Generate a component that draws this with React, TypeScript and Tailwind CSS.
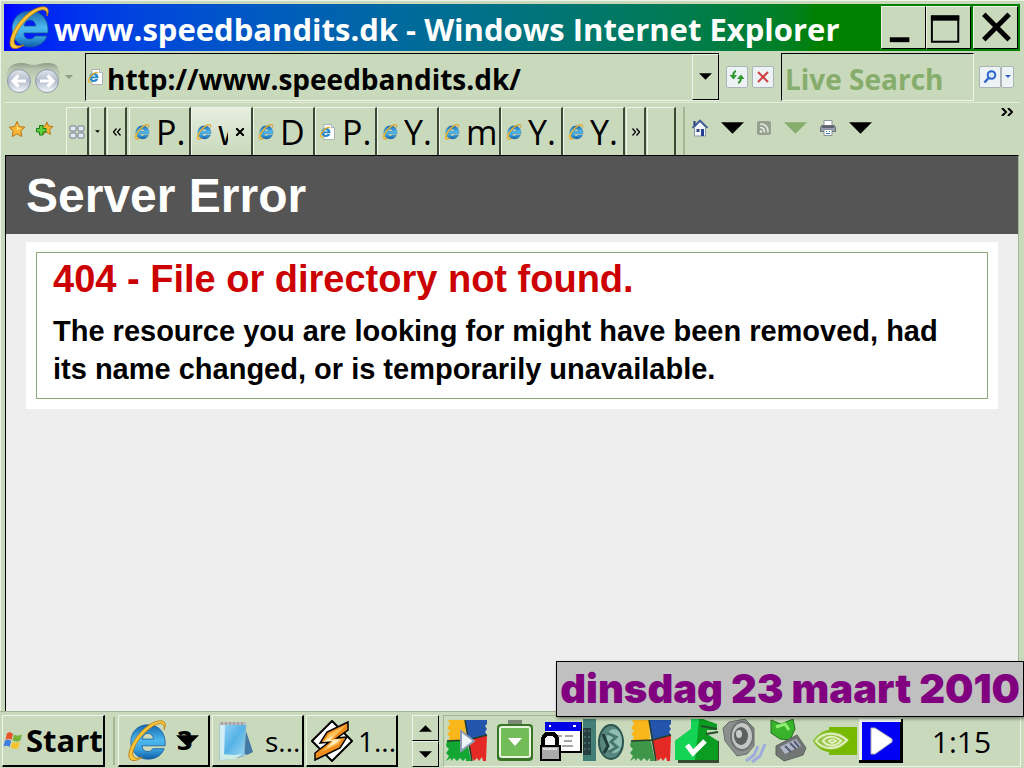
import React from "react";

const raised =
  "border border-t-[#eef5e8] border-l-[#eef5e8] border-r-black border-b-black";

function IEIcon({ className }: { className: string }) {
  return (
    <svg viewBox="0 0 42 44" className={className} aria-hidden="true">
      <defs>
        <linearGradient id="ieBlue" x1="0" y1="0" x2="0" y2="1">
          <stop offset="0" stopColor="#1668ae" />
          <stop offset="0.45" stopColor="#4cb8ee" />
          <stop offset="0.7" stopColor="#3aa4e2" />
          <stop offset="1" stopColor="#0f5fa8" />
        </linearGradient>
      </defs>
      <path
        fillRule="evenodd"
        fill="url(#ieBlue)"
        stroke="#14599a"
        strokeWidth="0.8"
        d="M22 5C11 5 4 13 4 23C4 34 12 41 22 41C31 41 37 36 39 30H27C26 32 24 33 22 33C18 33 16 31 16 27H40C41 14 34 5 22 5ZM16 20C17 16 19 14 22 14C25 14 27 16 28 20Z"
      />
      <path
        fill="#fdc63a"
        stroke="#b87a12"
        strokeWidth="0.9"
        d="M39 10C44 -2 32 -1 22 6C11 14 2 28 2 37C2 44 9 44 16 39C10 41 6 40 6 35C7 27 15 15 25 8C33 2 40 2 39 10Z"
      />
    </svg>
  );
}

function PageIcon({ className }: { className: string }) {
  return (
    <svg viewBox="0 0 16 16" className={className} aria-hidden="true">
      <path d="M4 .5h7.5l3 3v12H4z" fill="#fff" stroke="#a9b3b9" />
      <path d="M11.5.5v3h3" fill="#dde4e8" stroke="#a9b3b9" />
      <path
        fillRule="evenodd"
        fill="#2488cf"
        d="M6 4C3 4 1.400 6 1.400 8.500C1.400 11 3 13 6 13C8 13 9.500 12 10.200 10H7.500C6 11.500 4 11 4 9.300H10.400C10.700 6 9 4 6 4ZM4 7.500C4.500 5.700 7.300 5.700 7.700 7.500Z"
      />
      <path d="M10 4C9 2 3 5 1 10C0 13 1 14 3.500 12.500" fill="none" stroke="#e9b22d" strokeWidth="1.200" />
    </svg>
  );
}

function Down({ className }: { className: string }) {
  return (
    <svg viewBox="0 0 24 12" className={className} aria-hidden="true">
      <path d="M0 0H24L12 12Z" fill="currentColor" />
    </svg>
  );
}

function Chevrons({ left }: { left?: boolean }) {
  return (
    <svg viewBox="0 0 8 8" className={"h-2 w-2 " + (left ? "rotate-180" : "")} aria-hidden="true">
      <path d="M.5.5L3.500 4L.5 7.500M4.500.5L7.500 4L4.500 7.500" fill="none" stroke="#000" strokeWidth="1.300" />
    </svg>
  );
}

function NavArrows() {
  return (
    <svg viewBox="0 0 72 32" className="h-8 w-[72px] shrink-0" aria-hidden="true">
      <defs>
        <linearGradient id="nav" x1="0" y1="0" x2="0" y2="1">
          <stop offset="0" stopColor="#dfe5eb" />
          <stop offset="0.5" stopColor="#b3bccb" />
          <stop offset="1" stopColor="#f4f8fb" />
        </linearGradient>
        <linearGradient id="navTop" x1="0" y1="0" x2="0" y2="1">
          <stop offset="0" stopColor="#8f9c88" />
          <stop offset="0.35" stopColor="#b7c3ae" />
          <stop offset="1" stopColor="#c9d9bc" />
        </linearGradient>
      </defs>
      <path d="M0 20C-1 6 7 1 17 2C23 3 25 4 28 4C31 4 35 2 41 2C51 1 55 7 54 20Z" fill="url(#navTop)" />
      <circle cx="13" cy="20" r="11.500" fill="url(#nav)" stroke="#8d99a5" />
      <circle cx="41" cy="20" r="11.500" fill="url(#nav)" stroke="#8d99a5" />
      <path d="M20 20H7M12.500 14.500L7 20L12.500 25.500M34 20H47M41.500 14.500L47 20L41.500 25.500" stroke="#fff" strokeWidth="3.200" fill="none" />
      <path d="M59 14H67L63 18Z" fill="#8f9c88" />
    </svg>
  );
}

function Star({ plus }: { plus?: boolean }) {
  return (
    <svg viewBox="0 0 18 18" className="h-[18px] w-[18px]" aria-hidden="true">
      <path
        d={plus ? "M12 2L13.500 6L18 6.500L14.700 9.500L15.500 14.500L11.500 12L8 14L8.800 9L6 6.500L10.200 6Z" : "M9 1.500L11.300 6.500L16.800 7.200L12.800 11L13.800 16.500L9 13.800L4.200 16.500L5.200 11L1.200 7.200L6.700 6.500Z"}
        fill="#fbb733"
        stroke="#b9761b"
      />
      {plus ? (
        <path d="M4.500 5.500H8V8.500H11V12H8V15H4.500V12H1.500V8.500H4.500Z" fill="#5fd23e" stroke="#1d7a1a" />
      ) : (
        <path d="M9 4.500L10.400 7.800L13.500 8.300L9 10Z" fill="#ffe48c" />
      )}
    </svg>
  );
}

function QuickTabsIcon() {
  return (
    <svg viewBox="0 0 16 14" className="h-[14px] w-4" aria-hidden="true">
      <g fill="#e6ecf2" stroke="#6d7a90">
        <rect x="1" y="1" width="6" height="5" rx="1" />
        <rect x="9" y="1" width="6" height="5" rx="1" />
        <rect x="1" y="8" width="6" height="5" rx="1" />
        <rect x="9" y="8" width="6" height="5" rx="1" />
      </g>
    </svg>
  );
}

function HomeIcon() {
  return (
    <svg viewBox="0 0 16 18" className="h-[18px] w-4" aria-hidden="true">
      <path d="M2.500 2V7" stroke="#26377c" strokeWidth="2" />
      <path d="M2.500 8.500L8 3L13.500 8.500V17H2.500Z" fill="#f3f6fa" stroke="#8995ae" />
      <path d="M.5 9L8 1.500L15.500 9" fill="none" stroke="#3a5796" strokeWidth="1.600" />
      <rect x="4.500" y="10" width="3" height="3" fill="#33457f" />
      <rect x="9" y="10" width="3" height="7" fill="#25408f" />
    </svg>
  );
}

function RssIcon() {
  return (
    <svg viewBox="0 0 14 14" className="h-[14px] w-[14px]" aria-hidden="true">
      <rect width="14" height="14" rx="2" fill="#96a08e" />
      <g fill="none" stroke="#e2e8dc" strokeWidth="1.600">
        <path d="M3 3C8 3 11 6 11 11.500M3 6.500C6 6.500 7.500 8 7.500 11.500" />
      </g>
      <circle cx="4" cy="10.500" r="1.300" fill="#e2e8dc" />
    </svg>
  );
}

function PrinterIcon() {
  return (
    <svg viewBox="0 0 16 16" className="h-4 w-4" aria-hidden="true">
      <path d="M4 6V.5H12V6" fill="#fff" stroke="#8b939f" />
      <path d="M1.500 5.500H14.500L15.500 8V11.500H.5V8Z" fill="#9a9fab" stroke="#6a6e79" />
      <path d="M2 7H14" stroke="#50545f" strokeWidth="1.600" />
      <path d="M4 9.500H12V15.500H4Z" fill="#fff" stroke="#8b939f" />
      <path d="M6 11.500H7M9 11.500H10M6 13.500H10" stroke="#3478b7" />
    </svg>
  );
}

function WindowsFlag() {
  return (
    <svg viewBox="0 0 20 20" className="h-5 w-5 shrink-0" aria-hidden="true">
      <path d="M4 2C6 1 8 1 10 3L8.500 9C6.500 7.500 4.500 8 2.500 8.500Z" fill="#e8572b" />
      <path d="M11 3.500C13 5 16 5 19 3.500L17.500 9.500C15 11 12 11 9.500 9.500Z" fill="#76b43c" />
      <path d="M2 9.500C4 8.500 6 8.500 8.200 10L6.500 16C4.500 14.500 2.500 14.500.5 15.500Z" fill="#3f7ce0" />
      <path d="M9.200 11C12 12 14 12 17 10.500L15.500 17C13 18.500 10 18 7.500 16.500Z" fill="#f4c530" />
    </svg>
  );
}

function NotepadIcon() {
  return (
    <svg viewBox="0 0 36 42" className="h-[42px] w-9 shrink-0" aria-hidden="true">
      <defs>
        <linearGradient id="pad" x1="0" y1="0" x2="1" y2="1">
          <stop offset="0" stopColor="#9fd8f6" />
          <stop offset="0.5" stopColor="#56b2e6" />
          <stop offset="1" stopColor="#a6dcf2" />
        </linearGradient>
      </defs>
      <path d="M27 8L35 32L29 35L24 33Z" fill="#4279a6" />
      <path d="M2 3L28 4L26 36L17 38L2 40Z" fill="url(#pad)" stroke="#8cb6c9" />
      <path d="M2 3H7L6 39H2Z" fill="#cfeef6" />
      <path d="M2 34L17 35L24 34L17 39L2 40Z" fill="#cdeee8" />
      <path d="M2 2H28V5H2Z" fill="#b8bfc4" />
      <path d="M4 2V5M8 2V5M12 2V5M16 2V5M20 2V5M24 2V5" stroke="#a79690" strokeWidth="1.500" />
    </svg>
  );
}

function WinampIcon() {
  return (
    <svg viewBox="0 0 42 42" className="h-[42px] w-[42px] shrink-0" aria-hidden="true">
      <path d="M21 1L41 21L21 41L1 21Z" fill="#fff" stroke="#000" strokeWidth="2" />
      <path d="M37 2L16 12L9 23L18 22L4 33V40L29 28L36 17L26 18L37 10Z" fill="#f08c1c" stroke="#000" strokeWidth="1.500" />
      <path d="M35 5L18 14L13 21L24 20L10 32L27 24L31 19L20 20Z" fill="#ffc25a" />
      <path d="M12 22L22 21L15 28L25 23L29 19L19 20L23 15Z" fill="#fff0c0" />
    </svg>
  );
}

function ColourBlocks({ play }: { play?: boolean }) {
  return (
    <svg viewBox="0 0 42 42" className="h-[42px] w-[42px] shrink-0" aria-hidden="true">
      <path d="M2 0H19L20 20H2L4 17L1 14L4 11L1 8L4 4Z" fill="#f9b71c" />
      <path d="M19 0H41V4L39 6L41 9L39 12L41 15L22 20Z" fill="#2455ac" />
      <path d="M1 21H21L25 41H20V38L17 41L14 38L11 41L8 38L5 41V38L0 41L3 36L0 33L3 29L0 26Z" fill={play ? "#12a633" : "#3e9648"} />
      <path d="M22 20L41 15L40 41H37L36 37L33 41L31 38L28 41L26 38Z" fill="#e52a26" />
      <path d="M19 0L26 41M1 21L22 20L41 15" stroke="#233d28" strokeWidth="1.500" fill="none" />
      {play && <path d="M15 11L28 21L15 31Z" fill="#f0f4fb" stroke="#8c9ab2" strokeWidth="2" />}
    </svg>
  );
}

function TrayGreenBox() {
  return (
    <svg viewBox="0 0 38 42" className="h-[42px] w-[38px] shrink-0" aria-hidden="true">
      <path d="M12 2H26" stroke="#7d8879" strokeWidth="4" />
      <rect x="1" y="4" width="36" height="37" rx="4" fill="#387527" />
      <rect x="4" y="7" width="30" height="30" rx="2" fill="#72bd57" stroke="#e8f5df" strokeWidth="2" />
      <path d="M12 18H26L19 26Z" fill="#fff" />
    </svg>
  );
}

function TrayLock() {
  return (
    <svg viewBox="0 0 42 40" className="h-10 w-[42px] shrink-0" shapeRendering="crispEdges" aria-hidden="true">
      <rect x="6" y="1" width="36" height="31" fill="#000" />
      <rect x="6" y="1" width="34" height="29" fill="#fff" />
      <rect x="5" y="1" width="36" height="9" fill="#0000e6" />
      <path d="M9 5H11M33 5H36" stroke="#fff" strokeWidth="2" />
      <path d="M18 15H22M25 15H33M24 20H32M22 25H33" stroke="#a5a5a5" strokeWidth="2" />
      <path d="M3 25V17L6 13H14L17 17V25" fill="#fff" stroke="#000" strokeWidth="4" />
      <rect x="1" y="25" width="19" height="14" fill="#aaa" stroke="#000" strokeWidth="2" />
      <path d="M3 28H17" stroke="#ddd" strokeWidth="2" />
    </svg>
  );
}

function TrayDevices() {
  return (
    <svg viewBox="0 0 44 44" className="h-[44px] w-[44px] shrink-0" aria-hidden="true">
      <rect x="1" y="0" width="13" height="42" fill="#427f77" />
      <rect x="1" y="9" width="8" height="27" fill="#273f40" />
      <path d="M2 12H8M2 18H8M2 24H8M2 30H8" stroke="#5b8c86" strokeDasharray="2 2" />
      <ellipse cx="29" cy="23" rx="12" ry="17" fill="#57877e" stroke="#2c5750" strokeWidth="2" />
      <ellipse cx="32" cy="22" rx="8" ry="12" fill="#8fbdb1" />
      <path d="M25 14L34 18L29 23L35 28L27 33" stroke="#47766d" strokeWidth="3" fill="none" />
      <path d="M21 15L26 27L22 34" stroke="#203d3a" strokeWidth="3" fill="none" />
    </svg>
  );
}

function TrayCheck() {
  return (
    <svg viewBox="0 0 44 44" className="h-[44px] w-[44px] shrink-0" aria-hidden="true">
      <path d="M3 41H43V22H44V44H3Z" fill="#334c2f" />
      <path d="M0 22L16 10V0H28L42 5V11H32V15L43 22V41H0Z" fill="#0b9c22" />
      <path d="M0 22L16 10V0H24L20 41H0Z" fill="#13d455" />
      <path d="M26 7L42 10M31 15L43 13" stroke="#20512a" strokeWidth="2" />
      <path d="M12 26L18 34L30 22" fill="none" stroke="#fff" strokeWidth="5" />
    </svg>
  );
}

function TraySpeaker() {
  return (
    <svg viewBox="0 0 46 44" className="h-[44px] w-[46px] shrink-0" aria-hidden="true">
      <path d="M2 9L8 3L24 0L33 9V27L26 35L16 37L4 22Z" fill="#8b8f8e" stroke="#6b706e" />
      <ellipse cx="21" cy="17" rx="11" ry="14" fill="#c3c6c5" stroke="#6f7472" strokeWidth="2" />
      <ellipse cx="20" cy="17" rx="7" ry="9" fill="#5c605f" />
      <ellipse cx="18" cy="15" rx="3" ry="4" fill="#c9cccb" />
      <path d="M25 42L33 36L37 27M31 43L39 37L44 25" stroke="#9eacdb" strokeWidth="3" fill="none" />
    </svg>
  );
}

function TrayPlug() {
  return (
    <svg viewBox="0 0 38 44" className="h-[44px] w-[38px] shrink-0" aria-hidden="true">
      <path d="M2 1L12 5L24 0L26 10L21 21L11 20L2 14Z" fill="#38b32b" stroke="#257020" />
      <path d="M7 8L16 5L20 11" stroke="#8df170" strokeWidth="3" fill="none" />
      <path d="M7 27L28 16L37 29L34 36L15 42L7 36Z" fill="#727775" stroke="#5b615e" />
      <path d="M11 28L27 20L32 27L16 35Z" fill="#b0b7c9" />
      <path d="M16 27L22 33M21 24L27 30M25 22L30 28" stroke="#555b72" strokeWidth="2" />
    </svg>
  );
}

function TrayNvidia() {
  return (
    <svg viewBox="0 0 44 30" className="h-[30px] w-[44px] shrink-0" aria-hidden="true">
      <path d="M16 1H44V29H16V26C8 25 3 20 0 15C4 9 9 5 16 4Z" fill="#76b900" />
      <path d="M0 15C7 3 25 2 36 14C27 27 9 27 0 15Z" fill="#96c647" />
      <g fill="none" stroke="#e2efbf" strokeWidth="2">
        <path d="M3 15C10 6 23 5 34 14C25 24 11 25 3 15Z" />
        <path d="M10 15C15 9 23 10 28 15C22 21 15 21 10 15Z" />
        <path d="M16 15C18 13 21 13 23 15L19 17Z" />
      </g>
    </svg>
  );
}

function TrayPlay() {
  return (
    <svg viewBox="0 0 44 44" className="h-[44px] w-[44px] shrink-0" aria-hidden="true">
      <rect width="44" height="44" fill="#000" />
      <path d="M0 0H42V3H3V41H0Z" fill="#f2f5ef" />
      <rect x="3" y="3" width="38" height="38" fill="#0000f5" />
      <path d="M12 9H16L33 20V23L16 35H12Z" fill="#fff" stroke="#b0b0b0" />
    </svg>
  );
}

function Tab({ label, page, active }: { label: string; page?: boolean; active?: boolean }) {
  return (
    <button
      className={
        "flex h-full w-[62px] shrink-0 items-center border-r-2 border-r-[#3c4936] border-t border-t-[#eef5e8] border-l border-l-[#eef5e8] pl-[4px] " +
        (active ? "bg-gradient-to-b from-[#e6eee0] to-[#c9d9bc]" : "")
      }
    >
      {page ? <PageIcon className="h-4 w-4 shrink-0" /> : <IEIcon className="h-4 w-4 shrink-0" />}
      <span className={"ml-[6px] text-left text-[34px] leading-[46px] whitespace-nowrap " + (active ? "w-[10px] overflow-hidden" : "")}>
        {label}
      </span>
      {active && (
        <svg viewBox="0 0 8 8" className="ml-[8px] h-2 w-2 shrink-0" aria-hidden="true">
          <path d="M0 0L8 8M8 0L0 8" stroke="#000" strokeWidth="2" />
        </svg>
      )}
    </button>
  );
}

function TitleBar() {
  const button = "flex h-[43px] w-[45px] items-center justify-center border border-t-[#eef5e8] border-l-[#eef5e8] border-r-black border-b-black bg-[#c9d9bc]";
  return (
    <header className="flex h-[47px] shrink-0 items-center bg-gradient-to-r from-[#0000ff] to-[#008000] to-80% pr-[2px] pl-[4px]">
      <IEIcon className="h-[44px] w-[42px] shrink-0" />
      <h1 className="ml-[4px] flex-1 pt-[3px] text-[31px] leading-[44px] font-bold whitespace-nowrap text-white">
        www.speedbandits.dk - Windows Internet Explorer
      </h1>
      <div className="flex">
        <button aria-label="Minimize" className={button}>
          <svg viewBox="0 0 44 42" className="h-[42px] w-[44px]"><path d="M8 33H28" stroke="#000" strokeWidth="5" /></svg>
        </button>
        <button aria-label="Maximize" className={button}>
          <svg viewBox="0 0 44 42" className="h-[42px] w-[44px]"><path d="M5 9H32V35H5Z" fill="none" stroke="#000" strokeWidth="2" /><path d="M4 11H33" stroke="#000" strokeWidth="5" /></svg>
        </button>
        <button aria-label="Close" className={button + " ml-[2px]"}>
          <svg viewBox="0 0 44 42" className="h-[42px] w-[44px]"><path d="M10 7L36 33M36 7L10 33" stroke="#000" strokeWidth="5" /></svg>
        </button>
      </div>
    </header>
  );
}

function AddressBar() {
  const small = "flex h-[22px] items-center justify-center rounded-[2px] border border-[#a9b5b8] bg-[#edf2f4]";
  return (
    <div className="flex h-[51px] shrink-0 items-center pr-[6px] pl-[2px]">
      <button aria-label="Back and forward" className="flex w-[79px] shrink-0 items-center"><NavArrows /></button>
      <div className="flex h-[48px] min-w-0 flex-1 items-center border-t border-b border-l border-t-black border-b-[#eef5e8] border-l-black pl-[2px]">
        <PageIcon className="h-4 w-4 shrink-0" />
        <input
          aria-label="Address"
          defaultValue="http://www.speedbandits.dk/"
          className="ml-[3px] h-[44px] min-w-0 flex-1 bg-transparent pt-[4px] text-[28px] font-bold text-black outline-none"
        />
        <button aria-label="Address history" className={"flex h-[46px] w-[27px] items-center justify-center " + raised}>
          <Down className="h-[7px] w-[13px]" />
        </button>
      </div>
      <button aria-label="Refresh" className={small + " ml-[7px] w-[22px]"}>
        <svg viewBox="0 0 16 14" className="h-[14px] w-4">
          <path d="M7 1C4 2 4 5 4 7M9 13C12 12 12 9 12 7" fill="none" stroke="#2d9a2b" strokeWidth="2" />
          <path d="M.5 5L8 5L4.500 9.500ZM8 9H15.500L12 4.500Z" fill="#2d9a2b" />
        </svg>
      </button>
      <button aria-label="Stop" className={small + " ml-[4px] w-[22px]"}>
        <svg viewBox="0 0 12 12" className="h-3 w-3"><path d="M1 1L11 11M11 1L1 11" stroke="#cf4045" strokeWidth="2" /></svg>
      </button>
      <input
        aria-label="Search"
        placeholder="Live Search"
        className="ml-[7px] h-[48px] w-[193px] border border-t-black border-r-[#eef5e8] border-b-[#eef5e8] border-l-black bg-transparent pt-[4px] pl-[3px] text-[28px] font-bold outline-none placeholder:text-[#86ad6c] placeholder:opacity-100"
      />
      <button aria-label="Search the web" className={small + " ml-[5px] w-[22px]"}>
        <svg viewBox="0 0 14 14" className="h-[14px] w-[14px]">
          <circle cx="8.500" cy="5" r="3.800" fill="#dcebfb" stroke="#2c66cc" strokeWidth="2" />
          <path d="M5.500 8L1.500 12.500" stroke="#2c66cc" strokeWidth="2.500" />
        </svg>
      </button>
      <button aria-label="Search options" className={small + " w-[13px] text-[#2c66cc]"}>
        <Down className="h-[3px] w-[6px]" />
      </button>
    </div>
  );
}

function TabRow() {
  const slot = "flex h-full shrink-0 items-center justify-center border-t border-l border-t-[#eef5e8] border-l-[#eef5e8] border-r-2 border-r-[#3c4936]";
  return (
    <div className="flex h-[53px] shrink-0 items-end border-t border-[#e2edd9] pt-[4px]">
      <div className="flex h-full w-[62px] shrink-0 items-center gap-[9px] pb-[4px] pl-[4px]">
        <button aria-label="Favorites"><Star /></button>
        <button aria-label="Add to favorites"><Star plus /></button>
      </div>
      <button aria-label="Quick tabs" className={slot + " w-[23px]"}><QuickTabsIcon /></button>
      <button aria-label="Tab list" className={slot + " ml-[1px] w-[16px]"}><Down className="h-[3px] w-[5px]" /></button>
      <button aria-label="Scroll tabs left" className={slot + " ml-[1px] w-[20px]"}><Chevrons left /></button>
      <div className="flex h-full shrink-0 pl-[2px]">
        <Tab label="P." />
        <Tab label="w" active />
        <Tab label="D" />
        <Tab label="P." page />
        <Tab label="Y." />
        <Tab label="m" />
        <Tab label="Y." />
        <Tab label="Y." />
      </div>
      <button aria-label="Scroll tabs right" className={slot + " ml-[1px] w-[20px]"}><Chevrons /></button>
      <button aria-label="New tab" className={slot + " ml-[1px] w-[29px]"} />
      <div className="ml-[7px] h-full border-l-2 border-[#a3b696]" />
      <div className="flex h-full flex-1 items-center gap-[13px] pb-[6px] pl-[7px]">
        <button aria-label="Home"><HomeIcon /></button>
        <button aria-label="Home options"><Down className="h-[12px] w-[23px]" /></button>
        <button aria-label="Feeds"><RssIcon /></button>
        <button aria-label="Feed options" className="text-[#86ad6c]"><Down className="h-[12px] w-[23px]" /></button>
        <button aria-label="Print"><PrinterIcon /></button>
        <button aria-label="Print options"><Down className="h-[12px] w-[23px]" /></button>
      </div>
      <button aria-label="More commands" className="self-start pt-[1px] pr-[7px]">
        <svg viewBox="0 0 12 8" className="h-2 w-3" aria-hidden="true">
          <path d="M1 0L5 4L1 8M7 0L11 4L7 8" fill="none" stroke="#000" strokeWidth="2" />
        </svg>
      </button>
    </div>
  );
}

function Page() {
  return (
    <main className="mr-[1px] ml-[1px] min-h-0 flex-1 border-t border-r border-l border-t-black border-r-[#a3b696] border-l-black bg-[#eeeeee] font-['Liberation_Sans',sans-serif] font-bold">
      <div className="bg-[#555555] pl-[20px]">
        <h2 className="pt-[8px] pb-[6px] text-[48px] leading-[64px] text-white">Server Error</h2>
      </div>
      <section className="mt-[8px] mr-[20px] ml-[20px] bg-white p-[10px]">
        <div className="border border-[#8aab78] px-[16px] pt-[2px] pb-[10px]">
          <h3 className="text-[38px] leading-[48px] text-[#cc0000]">404 - File or directory not found.</h3>
          <p className="mt-[9px] text-[29px] leading-[38px] text-black">
            The resource you are looking for might have been removed, had its name changed, or is temporarily unavailable.
          </p>
        </div>
      </section>
    </main>
  );
}

function Taskbar() {
  const task = "flex h-[52px] shrink-0 items-center border border-t-[#eef5e8] border-l-[#eef5e8] border-r-2 border-b-2 border-r-black border-b-black";
  return (
    <footer className="relative flex h-[57px] shrink-0 items-start border-t border-[#a3b696] bg-[#c9d9bc] pt-[3px] pr-[3px] pl-[2px]">
      <button className={task + " w-[103px] text-[31px] font-bold"}>
        <WindowsFlag />
        <span className="ml-[3px]">Start</span>
      </button>
      <div className="mt-[2px] mr-[3px] ml-[8px] h-[48px] border-l-2 border-[#a3b696]" />
      <button className={task + " w-[92px] pl-[7px] text-[27px] font-bold"}>
        <IEIcon className="h-[42px] w-[42px] shrink-0" />
        <span className="ml-[9px]">3</span>
        <Down className="-ml-[16px] h-[12px] w-[23px]" />
      </button>
      <button className={task + " ml-[2px] w-[92px] pl-[5px] text-[28px]"}>
        <NotepadIcon />
        <span className="ml-[11px]">s...</span>
      </button>
      <button className={task + " ml-[2px] w-[92px] pl-[4px] text-[28px]"}>
        <WinampIcon />
        <span className="ml-[5px]">1...</span>
      </button>
      <div className="ml-[14px] flex h-[52px] w-[27px] shrink-0 flex-col">
        <button aria-label="Scroll up" className={"flex flex-1 items-center justify-center " + raised}><Down className="h-[7px] w-[13px] rotate-180" /></button>
        <button aria-label="Scroll down" className={"flex flex-1 items-center justify-center " + raised}><Down className="h-[7px] w-[13px]" /></button>
      </div>
      <div className="ml-[4px] flex h-[52px] min-w-0 flex-1 items-center border border-t-[#a3b696] border-r-[#eef5e8] border-b-[#eef5e8] border-l-[#a3b696] pl-[2px]">
        <div className="flex items-center">
          <ColourBlocks play />
          <div className="w-[8px]" />
          <TrayGreenBox />
          <div className="w-[6px]" />
          <TrayLock />
          <TrayDevices />
          <div className="w-[4px]" />
          <ColourBlocks />
          <div className="w-[3px]" />
          <TrayCheck />
          <div className="w-[2px]" />
          <TraySpeaker />
          <div className="w-[2px]" />
          <TrayPlug />
          <div className="w-[6px]" />
          <TrayNvidia />
          <div className="w-[2px]" />
          <TrayPlay />
        </div>
        <time className="flex-1 text-center text-[30px]">1:15</time>
      </div>
      <div role="tooltip" className="absolute right-0 bottom-[51px] border border-black bg-[#c0c0c0] px-[3px] font-['Inter',sans-serif] text-[40px] leading-[54px] font-black whitespace-nowrap text-[#800080] shadow-[1px_2px_3px_rgba(0,0,0,0.4)]">
        dinsdag 23 maart 2010
      </div>
    </footer>
  );
}

export default function App() {
  return (
    <div className="flex h-screen flex-col overflow-hidden bg-[#c9d9bc] font-['Open_Sans','Noto_Sans',sans-serif] text-black">
      <div className="flex min-h-0 flex-1 flex-col border-t border-l border-[#eef5e8] pt-[3px] pr-[4px] pl-[3px]">
        <TitleBar />
        <AddressBar />
        <TabRow />
        <Page />
      </div>
      <Taskbar />
    </div>
  );
}
